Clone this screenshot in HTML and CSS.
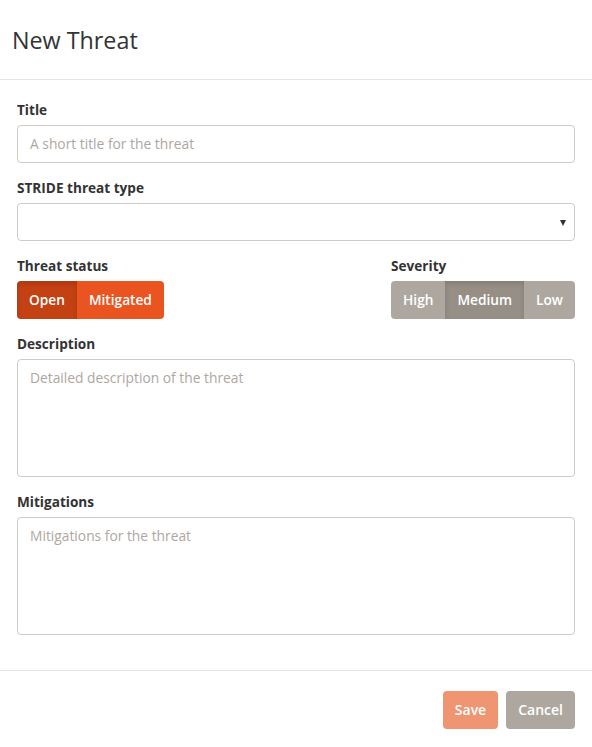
FILE: index.html
```html
<!DOCTYPE html>
<html>
<head>
<meta charset="utf-8">
<link rel="stylesheet" href="styles.css">
</head>
<body>
<div class="modal">
  <div class="modal-header">
    <h3 class="modal-title">New Threat</h3>
  </div>
  <div class="modal-body">
    <div class="form-group">
      <label class="label">Title</label>
      <div class="input"><span class="placeholder">A short title for the threat</span></div>
    </div>
    <div class="form-group">
      <label class="label">STRIDE threat type</label>
      <div class="input select"><span class="caret"></span></div>
    </div>
    <div class="form-group row">
      <div class="col">
        <label class="label">Threat status</label>
        <div class="btn-group">
          <span class="btn btn-primary active">Open</span>
          <span class="btn btn-primary">Mitigated</span>
        </div>
      </div>
      <div class="col">
        <label class="label">Severity</label>
        <div class="btn-group">
          <span class="btn btn-default">High</span>
          <span class="btn btn-default active">Medium</span>
          <span class="btn btn-default">Low</span>
        </div>
      </div>
    </div>
    <div class="form-group">
      <label class="label">Description</label>
      <div class="input textarea"><span class="placeholder">Detailed description of the threat</span></div>
    </div>
    <div class="form-group">
      <label class="label">Mitigations</label>
      <div class="input textarea"><span class="placeholder">Mitigations for the threat</span></div>
    </div>
  </div>
  <div class="modal-footer">
    <span class="btn btn-primary disabled">Save</span>
    <span class="btn btn-default">Cancel</span>
  </div>
</div>
</body>
</html>
```
FILE: styles.css
```css
* { box-sizing: border-box; }
html, body { margin: 0; padding: 0; background: #fff; }
body {
  font-family: "Open Sans", "Liberation Sans", sans-serif;
  font-size: 14px;
  line-height: 20px;
  color: #333;
}
.modal { width: 592px; }
.modal-header {
  height: 80px;
  padding: 0 12px;
  display: flex;
  align-items: center;
  border-bottom: 1px solid #e5e5e5;
}
.modal-title {
  margin: 0;
  font-size: 23.3px;
  font-weight: 400;
  line-height: 30px;
  color: #333;
}
.modal-body { padding: 20px 17px 20px; }
.form-group { margin-bottom: 15px; }
.label {
  display: block;
  font-weight: 700;
  font-size: 13.6px;
  line-height: 20px;
  margin-bottom: 5px;
}
.input {
  height: 38px;
  border: 1px solid #cfcac5;
  border-radius: 4px;
  padding: 8px 12px;
  display: flex;
  align-items: center;
}
.placeholder { color: #aea79f; font-size: 13.8px; }
.select { justify-content: flex-end; padding-right: 8px; }
.caret {
  width: 0; height: 0;
  border-left: 3.5px solid transparent;
  border-right: 3.5px solid transparent;
  border-top: 6px solid #333;
  margin-top: 2px;
}
.textarea { height: 118px; align-items: flex-start; padding-top: 8px; }
.row { display: flex; justify-content: space-between; }
.col { display: flex; flex-direction: column; }
.btn-group { display: flex; }
.btn {
  display: inline-block;
  height: 38px;
  padding: 9px 12px;
  font-size: 14px;
  font-weight: 600;
  line-height: 20px;
  color: #fff;
  text-align: center;
}
.btn-group .btn { border-radius: 0; font-size: 13.7px; }
.btn-group .btn:first-child { border-radius: 4px 0 0 4px; }
.btn-group .btn:last-child { border-radius: 0 4px 4px 0; }
.btn-primary { background: #e95420; }
.btn-primary.active { background: #c34113; box-shadow: inset 0 3px 5px rgba(0,0,0,.125); }
.btn-default { background: #aea79f; }
.btn-default.active { background: #978f86; box-shadow: inset 0 3px 5px rgba(0,0,0,.125); }
.modal-footer {
  border-top: 1px solid #e5e5e5;
  padding: 20px 17px;
  display: flex;
  justify-content: flex-end;
  gap: 8px;
}
.modal-footer .btn { border-radius: 4px; }
.btn.disabled { background: #f09572; }
```
